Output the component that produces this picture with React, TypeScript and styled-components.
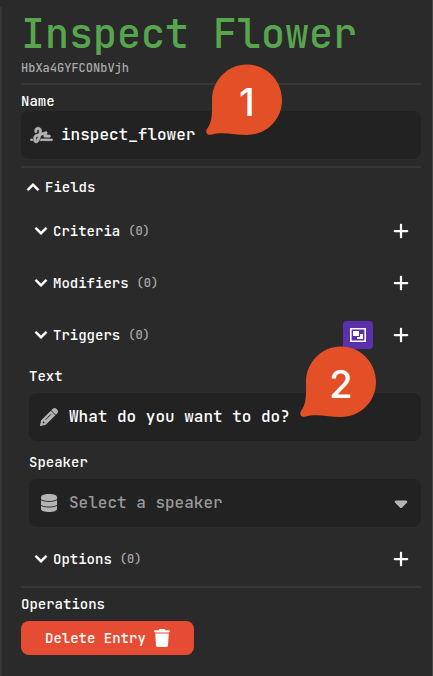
import React, { useState } from "react";
import styled, { createGlobalStyle } from "styled-components";
import { FaCaretDown, FaPlus, FaSignature, FaTrash } from "react-icons/fa6";
import { FaChevronDown, FaChevronUp } from "react-icons/fa";

const GlobalStyle = createGlobalStyle`
  *, *::before, *::after { box-sizing: border-box; }
  body { margin: 0; background: #2a2a2a; }
  body, button, input, select {
    font-family: "JetBrains Mono", "DejaVu Sans Mono", monospace;
  }
`;

const Page = styled.div`
  display: flex;
  flex-direction: column;
  min-height: 100vh;
  padding-top: 7px;
  border-right: 1px solid #484848;
  background: #2a2a2a;
  color: #fff;
`;

const Inspector = styled.main`
  flex: 1;
  padding: 3px 11px 20px 19px;
  border-left: 2px solid #363636;
`;

const Title = styled.h1`
  margin: 0;
  font-size: 40px;
  line-height: 48px;
  font-weight: 500;
  color: #57a64e;
`;

const EntryId = styled.p`
  margin: 0;
  font-size: 12px;
  line-height: 20px;
  font-weight: 500;
  color: #aaa;
`;

const Divider = styled.hr<{ $top: number }>`
  height: 2px;
  margin: ${(p) => p.$top}px 0 0;
  border: 0;
  background: #363636;
`;

const Label = styled.label<{ $top: number; $bottom: number }>`
  display: block;
  margin-top: ${(p) => p.$top}px;
  margin-bottom: ${(p) => p.$bottom}px;
  font-size: 14px;
  line-height: 20px;
  font-weight: 500;
`;

const Field = styled.div`
  position: relative;
  display: flex;
  align-items: center;
  height: 48px;
  border-radius: 8px;
  background: #222;
`;

const FieldIcon = styled.span`
  display: flex;
  flex: none;
  justify-content: center;
  width: 40px;
  color: #b4b4b4;
`;

const WideSignature = styled(FaSignature)`
  width: 23px;
  height: 18px;
  stroke: currentColor;
  stroke-width: 18;
`;

const TextInput = styled.input`
  flex: 1;
  min-width: 0;
  height: 46px;
  margin-bottom: 2px;
  padding: 0;
  border: 0;
  outline: 0;
  background: transparent;
  color: #fff;
  font-size: 16px;
  font-weight: 500;
`;

const Select = styled.select`
  flex: 1;
  min-width: 0;
  height: 46px;
  margin-bottom: 2px;
  padding: 0;
  border: 0;
  outline: 0;
  appearance: none;
  background: transparent;
  color: #999;
  font-size: 16px;
  font-weight: 500;
`;

const Pin = styled.span<{ $left: number }>`
  position: absolute;
  top: -47px;
  left: ${(p) => p.$left}px;
  width: 77px;
  height: 72px;
  padding-left: 5px;
  font-family: Inter, sans-serif;
  font-size: 38px;
  font-weight: 500;
  line-height: 76px;
  text-align: center;
  pointer-events: none;
`;

const PinShape = styled.svg`
  position: absolute;
  inset: 0;
`;

const PinNumber = styled.span`
  position: relative;
`;

const SectionToggle = styled.button`
  display: flex;
  align-items: center;
  gap: 5px;
  padding: 0;
  border: 0;
  background: transparent;
  color: #fff;
  font-size: 14px;
  line-height: 20px;
  font-weight: 500;
`;

const Chevron = styled(FaChevronDown)`
  width: 14px;
  height: 14px;
  stroke: currentColor;
  stroke-width: 14;
`;

const FieldsHeader = styled.div`
  padding: 9px 0 0 5px;
`;

const FieldsBody = styled.div`
  padding: 8px 0 0 8px;
`;

const ListRow = styled.div`
  display: flex;
  align-items: center;
  height: 52px;
  padding: 0 5px;
`;

const OptionsGroup = styled.div`
  padding-top: 6px;
`;

const Count = styled.span`
  margin-left: 3px;
  font-size: 12px;
  font-weight: 500;
  color: #aaa;
`;

const RowActions = styled.div`
  display: flex;
  align-items: center;
  gap: 13px;
  margin-left: auto;
`;

const AddButton = styled.button`
  display: flex;
  align-items: center;
  justify-content: center;
  width: 30px;
  height: 28px;
  padding: 0;
  border: 0;
  background: transparent;
  color: #fff;
`;

const GroupButton = styled(AddButton)`
  border-radius: 4px;
  background: #5a30ad;
`;

const DeleteButton = styled.button`
  display: flex;
  align-items: center;
  gap: 7px;
  height: 34px;
  margin-top: 7px;
  padding: 0 23px 0 24px;
  border: 0;
  border-radius: 8px;
  background: #e54c33;
  color: #fff;
  font-size: 14px;
  font-weight: 500;
`;

const OperationsTitle = styled.h2`
  margin: 6px 0 0;
  font-size: 14px;
  line-height: 20px;
  font-weight: 500;
`;

function Callout({ number, left }: { number: number; left: number }) {
  return (
    <Pin $left={left}>
      <PinShape width="77" height="72" viewBox="0 0 77 72" aria-hidden="true">
        <path
          fill="#e34f26"
          d="M41 .5C60.5 .5 76 16.5 76 36S60.5 71 41 71C28 71 17 67 5 70.7C1.5 71.7-1.2 68.2 1 65C7 57 6 47 6 36C6 16.5 21.5 .5 41 .5Z"
        />
      </PinShape>
      <PinNumber>{number}</PinNumber>
    </Pin>
  );
}

function GroupIcon() {
  return (
    <svg width="16" height="14" viewBox="0 0 16 14" aria-hidden="true">
      <path
        fill="#fff"
        fillRule="evenodd"
        d="M0 0H16V14H0ZM1.6 2V12L2 12.4H14L14.4 12V2L14 1.6H2Z"
      />
      <path fill="#fff" d="M3 3H9V8H3ZM10 6H13V11H7V9H10Z" />
    </svg>
  );
}

function PencilIcon() {
  return (
    <svg width="18" height="18" viewBox="0 0 18 18" aria-hidden="true">
      <path
        fill="currentColor"
        d="M12.600.900Q14.500-.800 16.300.800L17.300 1.800Q18.800 3.600 17.200 5.400L6.300 16.300Q5.800 16.800 5 17L.8 18Q-.1 18.100 0 17.200L1 13Q1.200 12.200 1.700 11.700Z"
      />
      <path
        fill="none"
        stroke="#222"
        strokeLinecap="round"
        d="M11 2.500L15.500 7M5.800 11.500L10.800 6.500"
      />
      <circle cx="3.600" cy="14.400" r=".9" fill="#222" />
    </svg>
  );
}

function DatabaseIcon() {
  return (
    <svg width="16" height="18" viewBox="0 0 16 18" aria-hidden="true">
      <path
        fill="currentColor"
        d="M0 3C0 1.300 3.600 0 8 0S16 1.300 16 3V15C16 16.700 12.400 18 8 18S0 16.700 0 15Z"
      />
      <path
        fill="none"
        stroke="#222"
        strokeWidth=".9"
        d="M-.5 5.200C2 8.200 14 8.200 16.500 5.200M-.5 10.800C2 13.800 14 13.800 16.500 10.800"
      />
    </svg>
  );
}

function ListSection({ name, grouped }: { name: string; grouped?: boolean }) {
  const [open, setOpen] = useState(false);
  return (
    <ListRow>
      <SectionToggle aria-expanded={open} onClick={() => setOpen(!open)}>
        <Chevron as={open ? FaChevronUp : FaChevronDown} />
        {name}
        <Count>(0)</Count>
      </SectionToggle>
      <RowActions>
        {grouped && (
          <GroupButton aria-label={`Group ${name}`}>
            <GroupIcon />
          </GroupButton>
        )}
        <AddButton aria-label={`Add to ${name}`}>
          <FaPlus size={18} />
        </AddButton>
      </RowActions>
    </ListRow>
  );
}

export default function App() {
  const [open, setOpen] = useState(true);
  return (
    <>
      <GlobalStyle />
      <Page>
        <Inspector>
          <Title>Inspect Flower</Title>
          <EntryId>HbXa4GYFCONbVjh</EntryId>
          <Divider $top={5} />
          <Label htmlFor="name" $top={6} $bottom={0}>
            Name
          </Label>
          <Field>
            <FieldIcon>
              <WideSignature />
            </FieldIcon>
            <TextInput id="name" defaultValue="inspect_flower" />
            <Callout number={1} left={185} />
          </Field>
          <Divider $top={7} />
          <FieldsHeader>
            <SectionToggle aria-expanded={open} onClick={() => setOpen(!open)}>
              <Chevron as={open ? FaChevronUp : FaChevronDown} />
              Fields
            </SectionToggle>
          </FieldsHeader>
          {open && (
            <FieldsBody>
              <ListSection name="Criteria" />
              <ListSection name="Modifiers" />
              <ListSection name="Triggers" grouped />
              <Label htmlFor="text" $top={5} $bottom={7}>
                Text
              </Label>
              <Field>
                <FieldIcon>
                  <PencilIcon />
                </FieldIcon>
                <TextInput id="text" defaultValue="What do you want to do?" />
                <Callout number={2} left={271} />
              </Field>
              <Label htmlFor="speaker" $top={11} $bottom={7}>
                Speaker
              </Label>
              <Field>
                <FieldIcon>
                  <DatabaseIcon />
                </FieldIcon>
                <Select id="speaker" defaultValue="">
                  <option value="">Select a speaker</option>
                </Select>
                <FieldIcon>
                  <FaCaretDown size={20} />
                </FieldIcon>
              </Field>
              <OptionsGroup>
                <ListSection name="Options" />
              </OptionsGroup>
            </FieldsBody>
          )}
          <Divider $top={1} />
          <OperationsTitle>Operations</OperationsTitle>
          <DeleteButton>
            Delete Entry
            <FaTrash size={18} />
          </DeleteButton>
        </Inspector>
      </Page>
    </>
  );
}
